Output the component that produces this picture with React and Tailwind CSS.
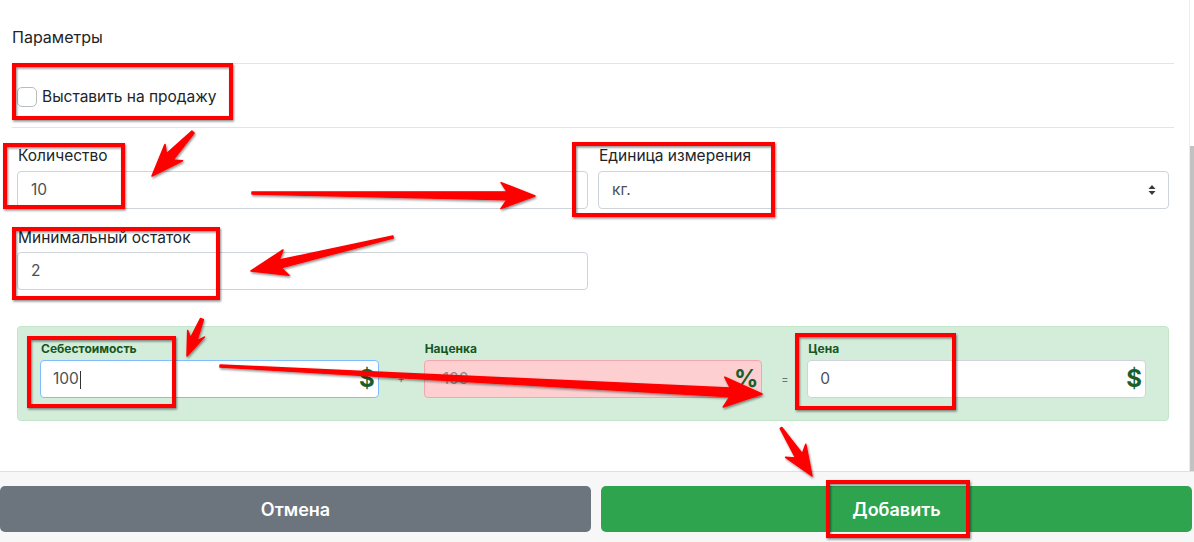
import React from 'react';

// tapered annotation arrow: tail -> tip
const arrowPoints = (x1, y1, x2, y2, w1, w2, L, H) => {
  const dx = x2 - x1, dy = y2 - y1;
  const len = Math.hypot(dx, dy);
  const ux = dx / len, uy = dy / len;
  const nx = -uy, ny = ux;
  const neckX = x2 - ux * L, neckY = y2 - uy * L;
  const back = 6;
  const pts = [
    [x1 + nx * w1 / 2, y1 + ny * w1 / 2],
    [neckX + nx * w2 / 2, neckY + ny * w2 / 2],
    [neckX - ux * back + nx * H, neckY - uy * back + ny * H],
    [x2, y2],
    [neckX - ux * back - nx * H, neckY - uy * back - ny * H],
    [neckX - nx * w2 / 2, neckY - ny * w2 / 2],
    [x1 - nx * w1 / 2, y1 - ny * w1 / 2],
  ];
  return pts.map(p => p.map(v => v.toFixed(1)).join(',')).join(' ');
};

const arrows = [
  [193, 132, 152, 176, 3, 9, 26, 12],
  [252, 193, 535, 196, 2, 8, 28, 13],
  [393, 237, 251, 271, 2, 8, 30, 13],
  [202, 319, 187, 356, 3, 7, 18, 9],
  [220, 366, 762, 394, 2, 9, 32, 15],
  [781, 428, 812, 476, 2, 8, 24, 12],
];

const boxes = [
  [14, 65, 217, 53],
  [5, 145, 118, 62],
  [574, 144, 199, 71],
  [14, 229, 204, 69],
  [29, 338, 145, 68],
  [797, 335, 157, 73],
  [828, 482, 140, 54],
];

const Annotations = () => (
  <svg className="absolute inset-0 pointer-events-none" width="1194" height="542" viewBox="0 0 1194 542">
    <defs>
      <filter id="sh" x="-10%" y="-10%" width="130%" height="130%">
        <feDropShadow dx="1" dy="1.5" stdDeviation="1" floodColor="#000" floodOpacity="0.45" />
      </filter>
    </defs>
    {boxes.map((b, i) => (
      <rect key={i} x={b[0]} y={b[1]} width={b[2]} height={b[3]} fill="none" stroke="#ff0000" strokeWidth="4" filter="url(#sh)" />
    ))}
    {arrows.map((a, i) => (
      <polygon key={i} points={arrowPoints(...a)} fill="#ff0000" stroke="#ff0000" strokeWidth="1.5" strokeLinejoin="round" filter="url(#sh)" />
    ))}
  </svg>
);

const PriceField = ({ label, value, unit, tone = 'white', caret }) => (
  <div className="flex flex-col">
    <span className="text-[12px] leading-[18px] font-bold text-[#155724] pl-[1px] mb-[2px]">{label}</span>
    <div className={`h-[38px] rounded-[4px] border flex items-center pl-[12px] pr-[3px] ${tone === 'red' ? 'bg-[#fdcfd0] border-[#f3a6ab]' : tone === 'focus' ? 'bg-white border-[#80bdff]' : 'bg-white border-[#ced4da]'}`}>
      <span className={`flex-1 text-[15.5px] ${tone === 'red' ? 'text-[#8a8a8a] pl-[6px]' : 'text-[#495057]'}`}>
        {value}{caret && <span className="inline-block w-[1px] h-[18px] bg-[#333] align-middle ml-[1px]" />}
      </span>
      <span className="text-[24px] font-bold text-[#1a5e2a] leading-none">{unit}</span>
    </div>
  </div>
);

const Sep = ({ children }) => (
  <div className="mt-[20px] h-[38px] flex items-center justify-center text-[11px] text-[#6c757d]">{children}</div>
);

export default function App() {
  return (
    <div className="relative w-[1194px] h-[542px] overflow-hidden bg-white font-['Inter',sans-serif] text-[#212529]">
      <div className="flex h-[471px]">
        <div className="flex-1 pl-[12px] pr-[15px]">
          <div className="h-[64px] border-b border-[#e2e4e7] pt-[25px] text-[16px] leading-[24px]">Параметры</div>
          <div className="h-[64px] border-b border-[#e2e4e7] flex items-center gap-[5px] px-[5px] pt-[2px]">
            <span className="w-[20px] h-[20px] rounded-[5px] border border-[#b6bcc2] bg-white" />
            <span className="text-[15.5px]">Выставить на продажу</span>
          </div>
          <div className="px-[5px]">
            <div className="grid grid-cols-2 gap-[10px] mt-[16px]">
              <div>
                <div className="text-[15.5px] leading-[24px] pl-[1px] mb-[3px]">Количество</div>
                <div className="h-[38px] rounded-[4px] border border-[#ced4da] flex items-center pl-[13px] text-[15.5px] text-[#495057]">10</div>
              </div>
              <div>
                <div className="text-[15.5px] leading-[24px] pl-[1px] mb-[3px]">Единица измерения</div>
                <div className="h-[38px] rounded-[4px] border border-[#ced4da] flex items-center pl-[13px] pr-[12px] text-[15.5px] text-[#495057]">
                  <span className="flex-1">кг.</span>
                  <svg width="8" height="12" viewBox="0 0 8 12"><path d="M4 1 L7.5 5 H0.5 Z M4 11 L7.5 7 H0.5 Z" fill="#343a40" /></svg>
                </div>
              </div>
            </div>
            <div className="grid grid-cols-2 gap-[10px] mt-[17px]">
              <div>
                <div className="text-[15.5px] leading-[24px] pl-[1px] mb-[2px]">Минимальный остаток</div>
                <div className="h-[38px] rounded-[4px] border border-[#ced4da] flex items-center pl-[13px] text-[15.5px] text-[#495057]">2</div>
              </div>
            </div>
            <div className="mt-[36px] h-[95px] rounded-[4px] border border-[#c3e6cb] bg-[#d4edda] pt-[13px] px-[22px] grid grid-cols-[1fr_45px_1fr_45px_1fr] items-start">
              <PriceField label="Себестоимость" value="100" unit="$" tone="focus" caret />
              <Sep>+</Sep>
              <PriceField label="Наценка" value="100" unit="%" tone="red" />
              <Sep>=</Sep>
              <PriceField label="Цена" value="0" unit="$" />
            </div>
          </div>
        </div>
        <div className="w-[5px] border-l border-[#ececec] flex flex-col">
          <div className="mt-[146px] flex-1 bg-[#c2c2c2]" />
        </div>
      </div>
      <div className="h-[71px] border-t border-[#e0e0e0] bg-[#f7f7f7] pt-[14px] pr-[2px] grid grid-cols-2 gap-[10px]">
        <button className="h-[46px] rounded-[5px] bg-[#6c757d] text-white text-[18px] font-semibold">Отмена</button>
        <button className="h-[46px] rounded-[5px] bg-[#2ea44f] text-white text-[18px] font-semibold">Добавить</button>
      </div>
      <Annotations />
    </div>
  );
}
